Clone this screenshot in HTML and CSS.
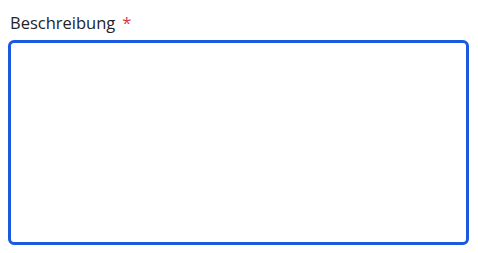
FILE: index.html
```html
<!DOCTYPE html>
<html>
    <head>
        <meta charset="utf-8">
        <title>Beschreibung</title>
        <link rel="stylesheet" href="styles.css">
    </head>
    <body>
        <div class="field">
            <label for="desc" class="label">Beschreibung<span class="req">*</span></label>
            <textarea id="desc" class="input"></textarea>
        </div>
    </body>
</html>
```

FILE: styles.css
```css
body {
    margin: 0;
    padding: 12px 9px 8px 8px;
    font-family: "Open Sans", "Noto Sans", sans-serif;
    background: #fff;
}

.field {
    display: flex;
    flex-direction: column;
    gap: 6px;
}

.label {
    font-size: 16.5px;
    line-height: 22px;
    color: #212529;
    padding-left: 2px;
}

.req {
    color: #dc3545;
    margin-left: 7px;
}

.input {
    box-sizing: border-box;
    width: 461px;
    height: 205px;
    border: 3px solid #1b5ae0;
    border-radius: 6px;
    resize: none;
    outline: none;
    font: inherit;
}
```
